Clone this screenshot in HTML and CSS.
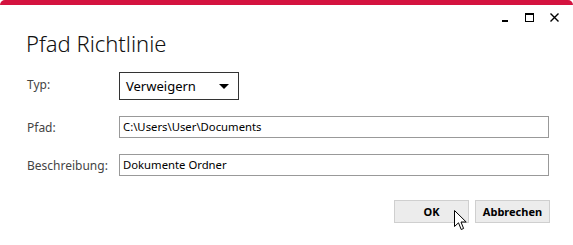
FILE: index.html
```html
<!DOCTYPE html>
<html lang="de">
  <head>
    <meta charset="UTF-8" />
    <title>Pfad Richtlinie</title>
    <link rel="stylesheet" href="styles.css">
  </head>
  <body>
    <div class="window">
      <div class="titlebar">
        <span class="ctl ctl-min"></span>
        <span class="ctl ctl-max"></span>
        <span class="ctl ctl-close">
          <svg width="9" height="9" viewBox="0 0 9 9"><path d="M0.5 0.5 L8.5 8.5 M8.5 0.5 L0.5 8.5" stroke="#000" stroke-width="1.4" fill="none"/></svg>
        </span>
      </div>

      <h1>Pfad Richtlinie</h1>

      <!-- Form rows -->
      <div class="form">
        <label>Typ:</label>
        <div class="select">
          <span>Verweigern</span>
          <svg width="10" height="5" viewBox="0 0 10 5"><path d="M0 0 H10 L5 5 Z" fill="#000"/></svg>
        </div>

        <label>Pfad:</label>
        <div class="field">C:\Users\User\Documents</div>

        <label>Beschreibung:</label>
        <div class="field">Dokumente Ordner</div>
      </div>

      <div class="buttons">
        <button class="ok">OK</button>
        <button>Abbrechen</button>
        <svg class="cursor" width="13" height="21" viewBox="0 0 13 21"><path d="M0.5 0.5 V16.5 L4.5 12.8 L7.2 19.5 L9.6 18.5 L7 12 H12.2 Z" fill="#fff" stroke="#000" stroke-width="1"/></svg>
      </div>
    </div>
  </body>
</html>
```

FILE: styles.css
```css
body {
  margin: 0;
  background: #fff;
  font-family: "Noto Sans", sans-serif;
}

.window {
  width: 573px;
  height: 245px;
  box-sizing: border-box;
  border-top: 5px solid #d4133f;
  border-radius: 5px 5px 0 0;
  position: relative;
}

.titlebar {
  display: flex;
  justify-content: flex-end;
  align-items: center;
  height: 15px;
  padding: 5px 6px 0 0;
}

.ctl {
  width: 25px;
  height: 10px;
  display: flex;
  justify-content: center;
  align-items: center;
}

.ctl-min::before {
  content: "";
  width: 6px;
  height: 2px;
  margin-top: 7px;
  background: #000;
}

.ctl-max::before {
  content: "";
  width: 7px;
  height: 6px;
  border: 1px solid #000;
  border-top-width: 2px;
}

h1 {
  margin: 3px 0 0 26px;
  font-size: 22px;
  font-weight: 300;
  color: #111;
  line-height: 30px;
}

.form {
  display: grid;
  grid-template-columns: 92px 430px;
  row-gap: 16px;
  align-items: center;
  margin: 14px 0 0 27px;
  font-size: 12px;
  color: #444;
}

.form label:first-child {
  margin-top: -3px;
}

.select {
  width: 120px;
  height: 28px;
  box-sizing: border-box;
  border: 1px solid #333;
  display: flex;
  align-items: center;
  justify-content: space-between;
  padding: 0 9px 0 6px;
  font-size: 13px;
  color: #000;
}

.field {
  height: 22px;
  box-sizing: border-box;
  border: 1px solid #999;
  padding: 0 3px;
  line-height: 20px;
  font-size: 11.3px;
  color: #000;
}

.buttons {
  display: flex;
  justify-content: flex-end;
  gap: 6px;
  margin: 24px 23px 0 0;
  position: relative;
}

button {
  width: 75px;
  height: 23px;
  background: #ececec;
  border: 1px solid #cfcfcf;
  font-family: "Noto Sans", sans-serif;
  font-size: 11px;
  font-weight: bold;
  color: #000;
  padding: 0;
}

.cursor {
  position: absolute;
  left: 454px;
  top: 10px;
}
```
